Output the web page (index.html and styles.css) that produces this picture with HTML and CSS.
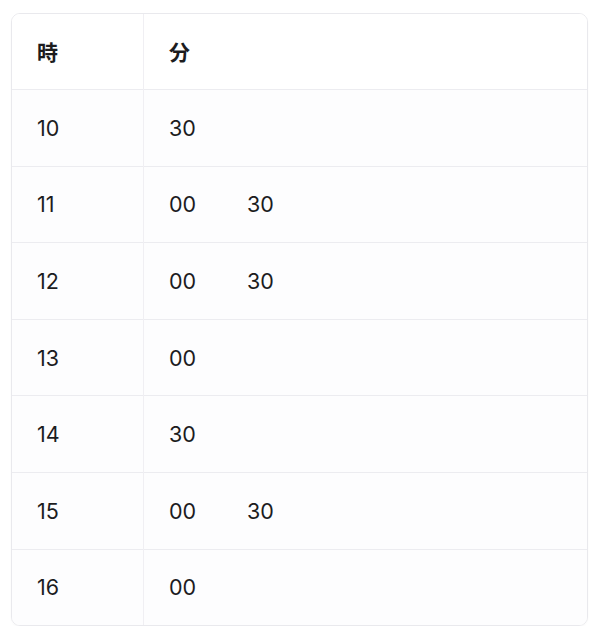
FILE: index.html
```html
<!DOCTYPE html>
<html lang="ja">
<head>
<meta charset="utf-8">
<link rel="stylesheet" href="styles.css">
</head>
<body>
<div class="card">
  <table class="tbl">
    <thead>
      <tr><th class="c1">時</th><th>分</th></tr>
    </thead>
    <tbody>
      <tr><td class="c1">10</td><td><span class="m">30</span></td></tr>
      <tr><td class="c1">11</td><td><span class="m">00</span><span class="m">30</span></td></tr>
      <tr><td class="c1">12</td><td><span class="m">00</span><span class="m">30</span></td></tr>
      <tr><td class="c1">13</td><td><span class="m">00</span></td></tr>
      <tr><td class="c1">14</td><td><span class="m">30</span></td></tr>
      <tr><td class="c1">15</td><td><span class="m">00</span><span class="m">30</span></td></tr>
      <tr><td class="c1">16</td><td><span class="m">00</span></td></tr>
    </tbody>
  </table>
</div>
</body>
</html>
```
FILE: styles.css
```css
html, body { margin: 0; padding: 0; background: #ffffff; }
body { padding: 13px 11px 0 11px; font-family: Inter, "Noto Sans CJK JP", sans-serif; color: #1c1c1e; }
.card {
  width: 577px;
  border: 1px solid #e9e9ed;
  border-radius: 9px;
  overflow: hidden;
  box-sizing: border-box;
  box-shadow: 0 1px 2px rgba(0,0,0,0.03);
}
.tbl { width: 100%; border-collapse: collapse; }
.tbl th, .tbl td {
  text-align: left;
  padding: 0 0 0 25px;
  height: 75.6px;
  vertical-align: middle;
  border-top: 1px solid #ececf0;
}
.tbl thead th { border-top: none; height: 74px; font-weight: 700; font-size: 21px; background: #ffffff; padding-bottom: 1px; }
.tbl .c1 { width: 106px; border-right: 1px solid #f0eff3; }
.tbl tbody td { font-size: 21.5px; font-weight: 400; background: #fdfdfe; }
.m { display: inline-block; width: 78px; }
```
